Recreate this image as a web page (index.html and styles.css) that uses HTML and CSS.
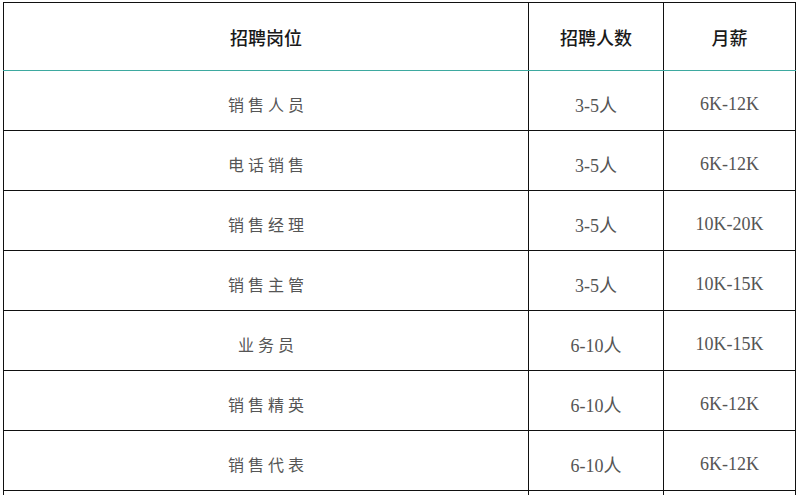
FILE: index.html
```html
<!DOCTYPE html>
<html lang="zh-CN">
<head>
<meta charset="utf-8">
<title>招聘岗位</title>
<link rel="stylesheet" href="styles.css">
</head>
<body>
<table class="jobs">
  <colgroup>
    <col class="c-pos">
    <col class="c-num">
    <col class="c-pay">
  </colgroup>
  <thead>
    <tr class="head">
      <th>招聘岗位</th>
      <th>招聘人数</th>
      <th>月薪</th>
    </tr>
  </thead>
  <tbody>
    <tr><td class="pos">销售人员</td><td class="num">3-5人</td><td class="num">6K-12K</td></tr>
    <tr><td class="pos">电话销售</td><td class="num">3-5人</td><td class="num">6K-12K</td></tr>
    <tr><td class="pos">销售经理</td><td class="num">3-5人</td><td class="num">10K-20K</td></tr>
    <tr><td class="pos">销售主管</td><td class="num">3-5人</td><td class="num">10K-15K</td></tr>
    <tr><td class="pos">业务员</td><td class="num">6-10人</td><td class="num">10K-15K</td></tr>
    <tr><td class="pos">销售精英</td><td class="num">6-10人</td><td class="num">6K-12K</td></tr>
    <tr><td class="pos">销售代表</td><td class="num">6-10人</td><td class="num">6K-12K</td></tr>
    <tr><td class="pos"></td><td class="num"></td><td class="num"></td></tr>
  </tbody>
</table>
</body>
</html>
```
FILE: styles.css
```css
html, body {
  margin: 0;
  padding: 0;
  background: #fff;
  overflow: hidden;
}
body {
  padding: 2px 0 0 3px;
  font-family: "Noto Sans CJK SC", "Noto Sans", sans-serif;
}
.jobs {
  border-collapse: collapse;
  width: 792px;
  table-layout: fixed;
}
.c-pos { width: 525px; }
.c-num { width: 135px; }
.c-pay { width: 132px; }
.jobs th,
.jobs td {
  border: 1px solid #111;
  text-align: center;
  padding: 0;
}
.head th {
  height: 68px;
  box-sizing: border-box;
  font-size: 18px;
  font-weight: 500;
  color: #1a1a1a;
  border-bottom: 1px solid #3ea9a0;
  padding-top: 1px;
}
.jobs tbody td {
  height: 60px;
  padding-top: 7px;
  box-sizing: border-box;
  color: #555;
  vertical-align: middle;
}
.pos {
  font-size: 16px;
  letter-spacing: 4px;
  text-indent: 4px;
}
.num {
  font-family: "Liberation Serif", "Noto Sans CJK SC", serif;
  font-size: 18px;
}
```
